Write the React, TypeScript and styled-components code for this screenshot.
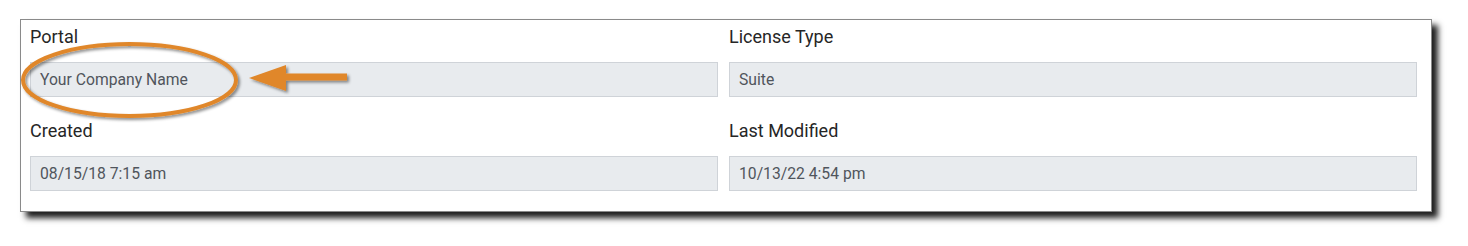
import React from 'react';
import styled, { createGlobalStyle } from 'styled-components';

const GlobalStyle = createGlobalStyle`
  html, body {
    margin: 0;
    padding: 0;
    background: #ffffff;
  }
  body {
    font-family: Roboto, "Liberation Sans", Arial, sans-serif;
  }
`;

const Page = styled.div`
  position: relative;
  width: 1468px;
  height: 246px;
  padding: 19px 0 0 20px;
  box-sizing: border-box;
`;

const Card = styled.div`
  width: 1412px;
  box-sizing: border-box;
  background: #ffffff;
  border: 1px solid #8a8a8a;
  padding: 5px 14px 20px 9px;
  box-shadow: 6px 6px 6px rgba(0, 0, 0, 0.88);
`;

const Grid = styled.div`
  display: grid;
  grid-template-columns: 1fr 1fr;
  column-gap: 11px;
  row-gap: 22px;
`;

const Field = styled.div`
  display: flex;
  flex-direction: column;
`;

const Label = styled.div`
  font-size: 18px;
  line-height: 24px;
  color: #262626;
  margin-bottom: 13px;
`;

const ReadOnlyValue = styled.div`
  height: 35px;
  box-sizing: border-box;
  display: flex;
  align-items: center;
  padding: 0 9px;
  background: #e8ebee;
  border: 1px solid #cfd3d8;
  font-size: 15.7px;
  color: #50555c;
`;

// annotation drawn on top of the card
const Callout = styled.svg`
  position: absolute;
  left: 0;
  top: 0;
  pointer-events: none;
`;

const fields = [
  { label: 'Portal', value: 'Your Company Name' },
  { label: 'License Type', value: 'Suite' },
  { label: 'Created', value: '08/15/18 7:15 am' },
  { label: 'Last Modified', value: '10/13/22 4:54 pm' },
];

export default function App() {
  return (
    <>
      <GlobalStyle />
      <Page>
        <Card>
          <Grid>
            {fields.map(f => (
              <Field key={f.label}>
                <Label>{f.label}</Label>
                <ReadOnlyValue>{f.value}</ReadOnlyValue>
              </Field>
            ))}
          </Grid>
        </Card>
        <Callout width={400} height={140} viewBox="0 0 400 140">
          <defs>
            <filter id="calloutShadow" x="-10%" y="-20%" width="130%" height="150%">
              <feDropShadow dx="2" dy="2" stdDeviation="1.4" floodColor="#000" floodOpacity="0.45" />
            </filter>
          </defs>
          <g filter="url(#calloutShadow)">
            <ellipse
              cx={129.5}
              cy={80}
              rx={106.5}
              ry={36}
              fill="none"
              stroke="#e0872a"
              strokeWidth={4}
            />
            <rect x={282} y={73.5} width={65} height={7} fill="#e0872a" />
            <polygon points="249,78 286,65 286,91" fill="#e0872a" />
          </g>
        </Callout>
      </Page>
    </>
  );
}
